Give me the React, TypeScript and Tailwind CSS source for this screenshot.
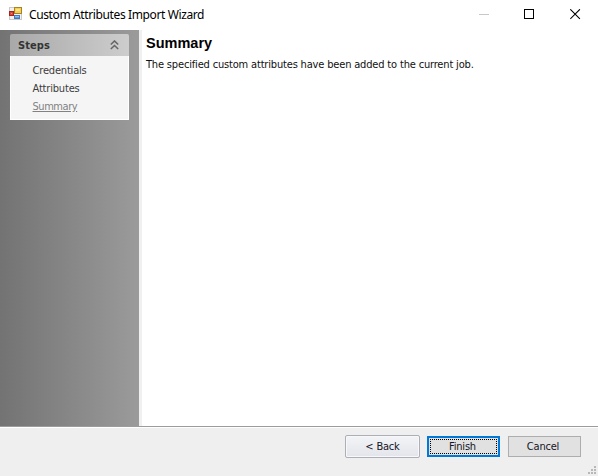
import React from "react";

const ui = "font-['DejaVu_Sans_Condensed','DejaVu_Sans',sans-serif] [font-stretch:condensed]";

function AppIcon() {
  return (
    <svg width="15" height="15" viewBox="0 0 15 15" shapeRendering="crispEdges">
      <rect x="1.5" y="1.5" width="12" height="12" fill="#f4f2f0" stroke="#cbc8c6" />
      <rect x="1.5" y="5.5" width="4" height="4" fill="#d84a3c" stroke="#a3261c" />
      <rect x="3" y="7" width="1" height="1" fill="#ef8a72" />
      <rect x="6.5" y="1.5" width="7" height="6" fill="#f7cf4c" stroke="#a8822a" />
      <rect x="8" y="3" width="4" height="2" fill="#fde58a" />
      <rect x="6.5" y="9.5" width="5" height="3" fill="#5a9be8" stroke="#4a79b8" />
      <rect x="7" y="10" width="4" height="1" fill="#8dc0f8" />
    </svg>
  );
}

function TitleBar() {
  return (
    <header className="flex h-[30px] shrink-0 items-start bg-white pl-2">
      <div className="pt-[6px]"><AppIcon /></div>
      <h1 className="ml-[6px] mt-[5px] w-[200px] whitespace-nowrap font-['Noto_Sans',sans-serif] text-[12px] leading-[20px] tracking-[-0.38px] text-black">
        Custom Attributes Import Wizard
      </h1>
      <div className="ml-auto flex gap-[35px] pr-[17px] pt-[9px]">
        <svg width="11" height="11" className="shrink-0"><path d="M1 5.5h10" stroke="#c8c8c8" /></svg>
        <svg width="11" height="11" className="shrink-0"><rect x="0.5" y="0.5" width="9" height="9" fill="none" stroke="#000" /></svg>
        <svg width="11" height="11" className="shrink-0"><path d="M0.3 0.3l9.6 9.6M9.9 0.3l-9.6 9.6" stroke="#000" strokeWidth="1.1" /></svg>
      </div>
    </header>
  );
}

function Sidebar() {
  return (
    <aside className="w-[139px] shrink-0 bg-linear-to-r from-[#737373] to-[#9b9b9b] pl-[10px] pt-1">
      <section className="w-[119px]">
        <div className="flex h-[22px] items-center justify-between rounded-t-[2px] bg-linear-to-r from-[#a9a9a9] to-[#cdcdcd] pl-2 pr-[10px]">
          <h2 className={`${ui} pt-[2px] text-[11px] font-bold leading-[20px] tracking-[0.1px] text-[#343434]`}>Steps</h2>
          <svg width="9" height="10" viewBox="0 0 9 10" fill="none" stroke="#666" strokeWidth="1.6">
            <path d="M0.8 4.5L4.5 1l3.7 3.5M0.8 9L4.5 5.5 8.2 9" />
          </svg>
        </div>
        <ul className={`${ui} h-[64px] border border-t-0 border-white bg-[#f5f5f5] pl-[21.5px] pt-[6px] text-[11px] leading-[18px] tracking-[-0.18px] text-[#3c3c3c]`}>
          <li>Credentials</li>
          <li>Attributes</li>
          <li className="tracking-[-0.45px] text-[#828282] underline underline-offset-1">Summary</li>
        </ul>
      </section>
    </aside>
  );
}

function Footer() {
  return (
    <footer className={`${ui} flex h-[50px] shrink-0 items-start border-t border-[#9c9c9c] bg-[#efefef] text-[11px] tracking-[-0.2px] text-[#151525]`}>
      <div className="flex h-full w-full items-start justify-end border-t border-white pr-[1px] pt-[7px]">
        <button className="mr-[7px] h-[23px] w-[75px] rounded-[2px] border border-[#abafb8] bg-linear-to-b from-[#f3f4f7] to-[#e4e5eb] pt-[2px] shadow-[inset_0_0_0_1px_#f8f8fb]">&lt; Back</button>
        <button className="mr-2 mt-[1px] h-[21px] w-[73px] border-2 border-[#0078d7] bg-[#e1e1e1] p-[1px]">
          <span className="flex h-full w-full items-center justify-center border border-dotted border-black pr-[2px] pt-[2px]">Finish</span>
        </button>
        <button className="mt-[1px] h-[21px] w-[73px] border border-[#adadad] bg-[#e1e1e1] pr-[3px] pt-[2px]">Cancel</button>
        <svg width="9" height="9" className="ml-[7px] mt-[31px] shrink-0" fill="#b8b8b8" shapeRendering="crispEdges">
          <path d="M6 0h2v2h-2zM3 3h2v2h-2zM6 3h2v2h-2zM0 6h2v2h-2zM3 6h2v2h-2zM6 6h2v2h-2z" />
        </svg>
      </div>
    </footer>
  );
}

export default function App() {
  return (
    <div className="flex h-[476px] w-[598px] flex-col overflow-hidden bg-white">
      <TitleBar />
      <div className="flex min-h-0 flex-1">
        <Sidebar />
        <main className="flex-1 border-l-[3px] border-[#f0f0f0] pl-1 pt-1">
          <h2 className="font-['Liberation_Sans',sans-serif] text-[14.5px] font-bold leading-[19px] text-black">Summary</h2>
          <p className={`${ui} whitespace-nowrap pt-[4px] text-[11px] leading-[16px] tracking-[-0.17px] text-[#101010]`}>
            The specified custom attributes have been added to the current job.
          </p>
        </main>
      </div>
      <Footer />
    </div>
  );
}
